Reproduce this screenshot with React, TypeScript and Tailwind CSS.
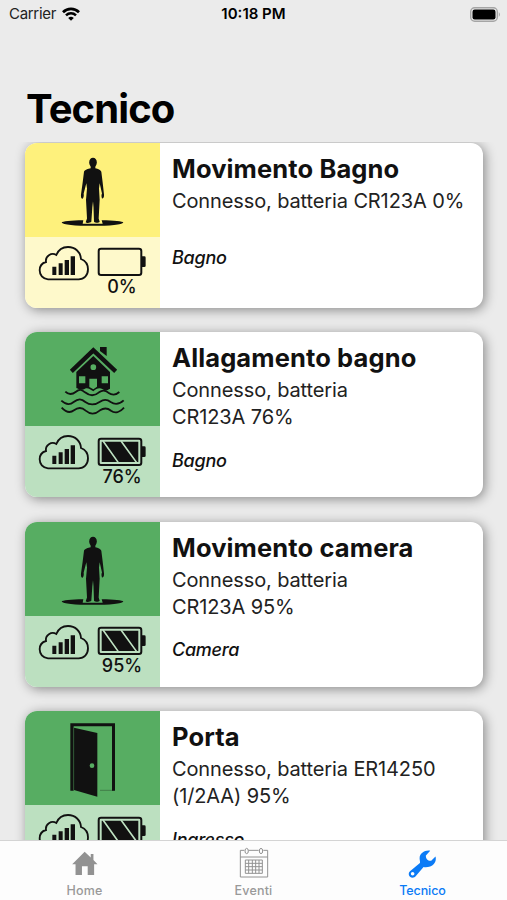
import clsx from "clsx";
import type { ReactNode } from "react";

type Device = {
  name: string;
  lines: string[];
  room: string;
  battery: number;
  icon: ReactNode;
};

const PersonIcon = () => (
  <svg viewBox="15 13.5 403.5 282" className="h-full w-full" fill="#111">
    <path d="M125 252C127 248 152 245 190 245L188 256H248L245 245C282 245 309 248 310 252C307 259 270 262 218 262C165 262 128 259 125 252Z" />
    <ellipse cx="219" cy="72" rx="11.500" ry="14.500" />
    <path d="M212 82H226V89C234 91 242 93 244 100L248 132L252 168C253 176 249 181 246 180C244 174 244 169 246 165L239 134L237 150L239 184L236 240L239 250C236 254 226 254 222 250L220.500 206L219 188L217 206L214 250C210 254 199 254 197 251L201 240L198 184L201 150L199 134L191 165C192 172 191 177 188 181C184 181 182 176 183 168L188 132L192 100C194 93 204 91 212 89Z" />
  </svg>
);

const FloodIcon = () => (
  <svg viewBox="15 12 403.5 282" className="h-full w-full" fill="none">
    <path d="M240 57H260V84L240 69Z" fill="#111" />
    <path
      d="M154 130L220 67L287 130"
      stroke="#111"
      strokeWidth="13"
      strokeLinejoin="miter"
    />
    <path
      fillRule="evenodd"
      d="M220 84L270 132V182C263 186 256 190 248 184C239 178 229 181 220 190C211 184 203 178 195 182C186 188 177 184 169 180V132ZM220 109A8.500 8.500 0 1 0 220 126A8.500 8.500 0 1 0 220 109ZM177 145V166H196V145ZM245 145V166H264V145ZM208 152V177L220 184L231 176V152Z"
      fill="#111"
    />
    <g stroke="#111" strokeWidth="5.500">
      <path d="M136 191C148 203 158 199 168 191C179 182 186 185 195 193C211 206 223 205 237 193C249 184 257 187 265 194C276 202 287 202 298 192" />
      <path d="M124 218C136 229 149 232 161 222C175 211 184 211 196 222C211 233 224 232 240 221C253 212 262 214 272 222C285 231 298 229 311 217" />
      <path d="M125 239C137 252 149 257 162 247C175 237 185 237 197 248C211 260 225 260 240 247C253 238 263 240 273 248C285 257 300 253 312 239" />
    </g>
  </svg>
);

const DoorIcon = () => (
  <svg viewBox="15 16 403.5 282" className="h-full w-full" fill="none">
    <path d="M151 53H285V255H276V62H161V255H151Z" fill="#111" />
    <path d="M162 66L232 82V273L162 253Z" fill="#111" />
    <path d="M161.500 63V254" stroke="#57ad62" strokeWidth="1" opacity="0.6" />
    <path d="M240 254H280" stroke="#111" strokeWidth="1.500" opacity="0.6" />
    <circle cx="216" cy="180" r="7" fill="#57ad62" />
  </svg>
);

const SignalIcon = () => (
  <svg viewBox="54 320 156 108" className="h-9 w-[52px]" fill="none">
    <path
      d="M84 423C68 422 59 410 59 396C59 383 67 374 78 371C75 354 94 341 109 350C115 335 128 326 144 326C166 326 182 342 183 362C196 367 204 379 204 393C204 411 192 423 176 423Z"
      stroke="#111"
      strokeWidth="5.500"
    />
    <path
      d="M97 385H109V410H97ZM116 375H128V410H116ZM134 365H147V410H134ZM152 354H165V410H152Z"
      fill="#111"
    />
  </svg>
);

const BatteryIcon = ({ level }: { level: number }) => (
  <svg viewBox="231 328 150 88" className="h-[29.3px] w-[50px]" fill="none">
    <rect
      x="236"
      y="333"
      width="128"
      height="79"
      rx="7"
      stroke="#111"
      strokeWidth="6"
    />
    <path d="M366 356H373Q377 356 377 360V384Q377 388 373 388H366Z" fill="#111" />
    {level > 0 && (
      <>
        <path d="M245 342H355V403H245Z" fill="#111" />
        <path d="M249 340L295 405M303 340L350 405" stroke="#bee1c1" strokeWidth="5" />
      </>
    )}
  </svg>
);

const devices: Device[] = [
  {
    name: "Movimento Bagno",
    lines: ["Connesso, batteria CR123A 0%"],
    room: "Bagno",
    battery: 0,
    icon: <PersonIcon />,
  },
  {
    name: "Allagamento bagno",
    lines: ["Connesso, batteria", "CR123A 76%"],
    room: "Bagno",
    battery: 76,
    icon: <FloodIcon />,
  },
  {
    name: "Movimento camera",
    lines: ["Connesso, batteria", "CR123A 95%"],
    room: "Camera",
    battery: 95,
    icon: <PersonIcon />,
  },
  {
    name: "Porta",
    lines: ["Connesso, batteria ER14250", "(1/2AA) 95%"],
    room: "Ingresso",
    battery: 95,
    icon: <DoorIcon />,
  },
];

const DeviceCard = ({ device }: { device: Device }) => {
  const empty = device.battery === 0;

  return (
    <article className="flex h-[165px] shrink-0 rounded-xl bg-white shadow-[2px_2px_12px_rgba(0,0,0,0.42)]">
      <div className="flex w-[134.5px] shrink-0 flex-col overflow-hidden rounded-l-xl">
        <div
          className={clsx("h-[94px]", empty ? "bg-[#fef17c]" : "bg-[#57ad62]")}
        >
          {device.icon}
        </div>
        <div
          className={clsx(
            "flex flex-1 gap-[7px] pl-[13px]",
            empty ? "bg-[#fef9cb]" : "bg-[#bce0c0]",
          )}
        >
          <div className="pt-[8px]">
            <SignalIcon />
          </div>
          <div className="flex flex-col items-center pt-[10.7px]">
            <BatteryIcon level={device.battery} />
            <span className="text-[18px] leading-[22px] font-medium text-[#111]">
              {device.battery}%
            </span>
          </div>
        </div>
      </div>
      <div className="flex flex-col pl-[12.5px] whitespace-nowrap text-[#111]">
        <h2 className="mt-[10px] text-[25.5px] leading-8 font-bold tracking-[0.12px]">
          {device.name}
        </h2>
        <div className="mt-[3.4px] text-[20px] leading-[26.7px] tracking-[-0.12px] text-[#222]">
          {device.lines.map((line) => (
            <p key={line}>{line}</p>
          ))}
        </div>
        <p
          className={clsx(
            "text-[18px] leading-6 font-medium tracking-[-0.25px] italic",
            device.lines.length > 1 ? "mt-[18px]" : "mt-[31.500px]",
          )}
        >
          {device.room}
        </p>
      </div>
    </article>
  );
};

const StatusBar = () => (
  <div className="grid h-7 shrink-0 grid-cols-3 items-center pr-[6px] pl-[9px] text-[15px]">
    <div className="flex items-center gap-[6px] text-[#222]">
      <span className="tracking-[-0.3px]">Carrier</span>
      <svg viewBox="0 0 18 14" className="h-[14px] w-[18px]" fill="none">
        <path d="M1 5.200C5.500 0.700 12.500 0.700 17 5.200" stroke="#000" strokeWidth="2.700" />
        <path d="M4 8.400C6.800 5.600 11.200 5.600 14 8.400" stroke="#000" strokeWidth="2.500" />
        <path d="M9 13.800L6.200 11Q9 8.700 11.800 11Z" fill="#000" />
      </svg>
    </div>
    <span className="pr-[3px] text-center font-semibold text-black">
      10:18 PM
    </span>
    <svg viewBox="0 0 31 15" className="h-[15px] w-[31px] justify-self-end" fill="none">
      <rect x="0.700" y="0.700" width="26.600" height="13.600" rx="4" stroke="#a5a5a5" strokeWidth="1.400" />
      <rect x="2.500" y="2.500" width="23" height="10" rx="2.200" fill="#000" />
      <path d="M28.800 5Q31 7.500 28.800 10Z" fill="#a5a5a5" />
    </svg>
  </div>
);

const TabBar = () => (
  <nav className="grid h-[60px] shrink-0 grid-cols-3 border-t border-[#d4d4d4] bg-[#fdfdfd] text-[12.5px] leading-4 font-medium text-[#999]">
    <div className="flex flex-col items-center">
      <svg viewBox="158 438 76 74" className="mt-[10px] h-[25px] w-[26px]" fill="#929292">
        <path d="M195 440L213 457V447H221V465L233 477H223V509H204V483H187V509H168V477H158Z" />
      </svg>
      <span className="mt-[7px] tracking-[0.2px]">Home</span>
    </div>
    <div className="flex flex-col items-center">
      <svg viewBox="117 80 90 93" className="mt-[6px] h-[31px] w-[30px]" fill="none" stroke="#929292" strokeWidth="3">
        <path d="M133 90H121V170H203V90H190M146 90H176M121 110H203" />
        <ellipse cx="140" cy="92" rx="5" ry="8" />
        <ellipse cx="183" cy="92" rx="5" ry="8" />
        <path d="M136 119H187V159H136ZM136 129H187M136 139H187M136 149H187M146 119V159M157 119V159M167 119V159M177 119V159" />
      </svg>
      <span className="mt-[5px] tracking-[0.2px]">Eventi</span>
    </div>
    <div className="flex flex-col items-center text-[#0b7bf6]">
      <svg viewBox="624 84 86 87" className="mt-[8px] h-[29px] w-[28.500px]" fill="#0b7bf6">
        <path
          fillRule="evenodd"
          d="M691 89C676 86 659 96 659 112C659 118 661 122 660 126L630 151C618 162 637 178 647 166L671 138C681 140 695 137 702 129C708 122 709 113 707 106L694 119C685 121 677 113 678 103ZM638 153A5.500 5.500 0 1 1 638 164A5.500 5.500 0 1 1 638 153Z"
        />
      </svg>
      <span className="mt-[5px] tracking-[-0.1px]">Tecnico</span>
    </div>
  </nav>
);

const App = () => {
  return (
    <div className="flex h-[900px] w-[507px] flex-col overflow-hidden bg-[#ebebeb] font-['Inter',sans-serif]">
      <StatusBar />
      <h1 className="mt-[55px] h-[59px] shrink-0 pl-[26px] text-[40px] leading-[52px] font-bold tracking-[-0.9px] text-black">
        Tecnico
      </h1>
      <main className="flex min-h-0 flex-1 flex-col gap-[24.5px] overflow-hidden pt-[0.5px] pr-[24.5px] pl-[25px]">
        {devices.map((device) => (
          <DeviceCard key={device.name} device={device} />
        ))}
      </main>
      <TabBar />
    </div>
  );
};
export default App;
